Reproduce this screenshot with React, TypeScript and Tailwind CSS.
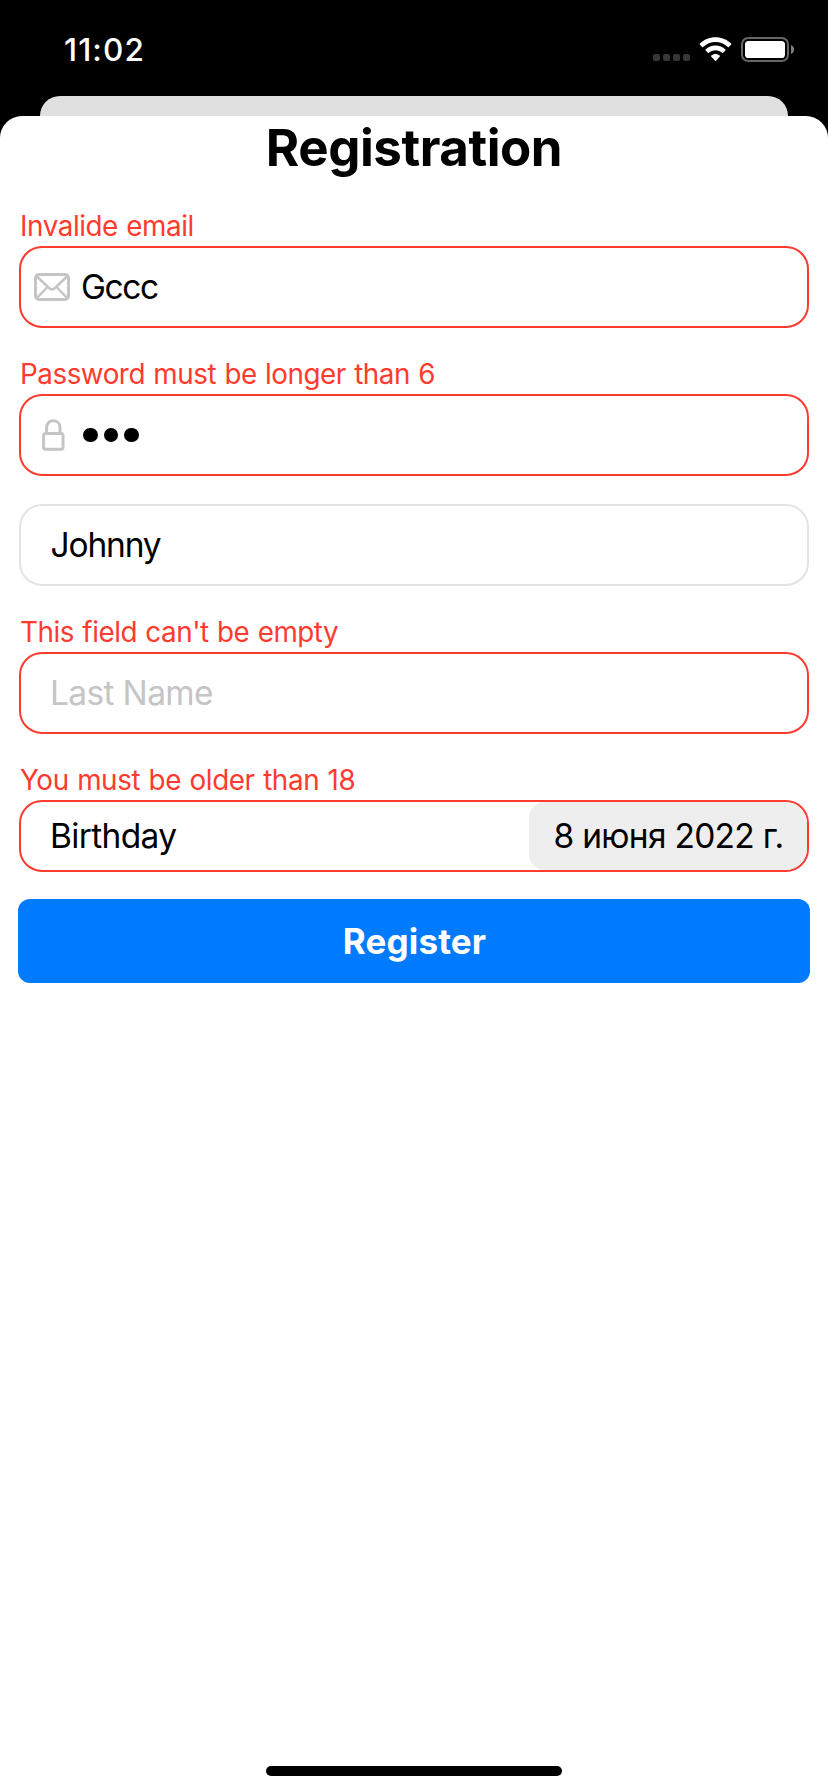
import type { ReactNode } from "react";

function SignalDots() {
  return (
    <div className="mt-[17px] flex gap-[3px]">
      {[0, 1, 2, 3].map((i) => (
        <span key={i} className="size-[7px] rounded-[2px] bg-[#373737]" />
      ))}
    </div>
  );
}

function WifiIcon() {
  return (
    <svg className="ml-[9px] h-[25px] w-[33px]" viewBox="0 0 33 25" fill="#fff">
      <path d="M16.5 0.3 C22.6 0.3 28.1 2.7 32.2 6.6 Q32.7 7.1 32.2 7.6 L29.9 9.9 Q29.4 10.4 28.9 9.9 C25.6 6.8 21.3 4.9 16.5 4.9 C11.7 4.9 7.4 6.8 4.1 9.9 Q3.6 10.4 3.1 9.9 L0.8 7.6 Q0.3 7.1 0.8 6.6 C4.9 2.7 10.4 0.3 16.5 0.3 Z" />
      <path d="M16.5 8.6 C20.3 8.6 23.8 10.1 26.4 12.5 Q26.9 13 26.4 13.5 L24.1 15.8 Q23.6 16.3 23.1 15.8 C21.3 14.2 19 13.3 16.5 13.3 C14 13.3 11.7 14.2 9.9 15.8 Q9.4 16.3 8.9 15.8 L6.6 13.5 Q6.1 13 6.6 12.5 C9.2 10.1 12.7 8.6 16.5 8.6 Z" />
      <path d="M16.5 17 C18.1 17 19.5 17.6 20.7 18.5 Q21.3 19 20.8 19.6 L17 23.8 Q16.5 24.3 16 23.8 L12.2 19.6 Q11.7 19 12.3 18.5 C13.5 17.6 14.9 17 16.5 17 Z" />
    </svg>
  );
}

function BatteryIcon() {
  return (
    <svg className="ml-[9px] h-[25px] w-[54px]" viewBox="0 0 54 25" fill="none">
      <rect x="1" y="1" width="46" height="23" rx="6.2" stroke="#666" strokeWidth="2" />
      <rect x="4" y="4" width="40" height="17" rx="3.6" fill="#fff" />
      <path d="M50 8 C52 8.8 53 10.5 53 12.5 C53 14.5 52 16.2 50 17 Z" fill="#808080" />
    </svg>
  );
}

function MailIcon() {
  return (
    <svg className="h-7 w-9" viewBox="0 0 36 28" fill="none" stroke="#c5c5c7" strokeLinejoin="round">
      <rect x="1.5" y="1.5" width="33" height="25" rx="3.4" strokeWidth="3" />
      <path d="M2.5 3 L15 15 Q18 17.8 21 15 L33.5 3" strokeWidth="2.5" />
      <path d="M2.5 25.3 L13 14.5 M33.5 25.3 L23 14.5" strokeWidth="2.5" />
    </svg>
  );
}

function LockIcon() {
  return (
    <svg className="h-8 w-[23px]" viewBox="0 0 23 32" fill="none" stroke="#c5c5c7" strokeWidth="3">
      <rect x="1.6" y="14.4" width="19.4" height="15.8" rx="2" />
      <path d="M4.6 14.4 V8.4 C4.6 4.3 7.6 1.8 11.3 1.8 C15 1.8 18 4.3 18 8.4 V14.4" />
    </svg>
  );
}

function ErrorLabel({ spacing, children }: { spacing: string; children: ReactNode }) {
  return (
    <p className={`h-10 pl-[1px] text-[27.8px] leading-[41px] text-[#ff3b30] [word-spacing:1px] ${spacing}`}>
      {children}
    </p>
  );
}

const box = "flex items-center rounded-[23px] border-2 text-[33.5px] leading-[41px]";

export default function App() {
  return (
    <div className="flex h-[1792px] w-[828px] flex-col bg-black font-[Inter,sans-serif]">
      <header className="flex h-24 items-start justify-between pt-[37px] pr-[33px] pl-[64px]">
        <span className="text-[31.5px] leading-[26px] font-[550] tracking-[1.1px] text-white">11:02</span>
        <div className="flex">
          <SignalDots />
          <WifiIcon />
          <BatteryIcon />
        </div>
      </header>

      <div className="mx-10 h-5 shrink-0 rounded-t-[20px] bg-[#e0e0e0]" />

      <main className="flex flex-1 flex-col rounded-t-[22px] bg-white px-[19px]">
        <h1 className="h-16 text-center text-[51px] leading-[64px] font-bold tracking-[-0.45px] text-black">
          Registration
        </h1>

        <section className="mt-[26px]">
          <ErrorLabel spacing="tracking-[-0.42px]">Invalide email</ErrorLabel>
          <div className={`${box} h-[82px] border-[#ff3b30] pl-[13px]`}>
            <MailIcon />
            <span className="pl-[11px] tracking-[-1.4px]">Gccc</span>
          </div>
        </section>

        <section className="mt-[26px]">
          <ErrorLabel spacing="tracking-[-0.46px]">Password must be longer than 6</ErrorLabel>
          <div className={`${box} h-[82px] border-[#ff3b30] pl-[21px]`}>
            <LockIcon />
            <div className="flex gap-[6px] pl-[18px]" role="img" aria-label="•••">
              <span className="size-[14.6px] rounded-full bg-black" />
              <span className="size-[14.6px] rounded-full bg-black" />
              <span className="size-[14.6px] rounded-full bg-black" />
            </div>
          </div>
        </section>

        <div className={`${box} mt-7 h-[82px] border-[#e3e3e3] pl-[29.5px] tracking-[-1.15px]`}>Johnny</div>

        <section className="mt-[26px]">
          <ErrorLabel spacing="tracking-[-0.46px]">This field can't be empty</ErrorLabel>
          <div className={`${box} h-[82px] border-[#ff3b30] pl-[29px] tracking-[-0.65px] text-[#c5c5c7]`}>
            Last Name
          </div>
        </section>

        <section className="mt-[26px]">
          <ErrorLabel spacing="tracking-[-0.38px]">You must be older than 18</ErrorLabel>
          <div className={`${box} h-[72px] justify-between overflow-hidden border-[#ff3b30] pl-[29px]`}>
            <span className="tracking-[-0.65px]">Birthday</span>
            <span className="h-[68px] w-[278px] rounded-l-[16px] rounded-r-[21px] bg-[#eee] pl-[24.5px] leading-[69px] tracking-[-0.72px]">
              8 июня 2022 г.
            </span>
          </div>
        </section>

        <button className="-mx-[1px] mt-[27px] h-[84px] rounded-[12px] bg-[#007aff] pl-[1px] text-[35px] leading-[84px] font-[650] tracking-[0.15px] text-white">
          Register
        </button>

        <div className="mx-auto mt-auto mb-4 h-[10px] w-[296px] rounded-full bg-black" />
      </main>
    </div>
  );
}
